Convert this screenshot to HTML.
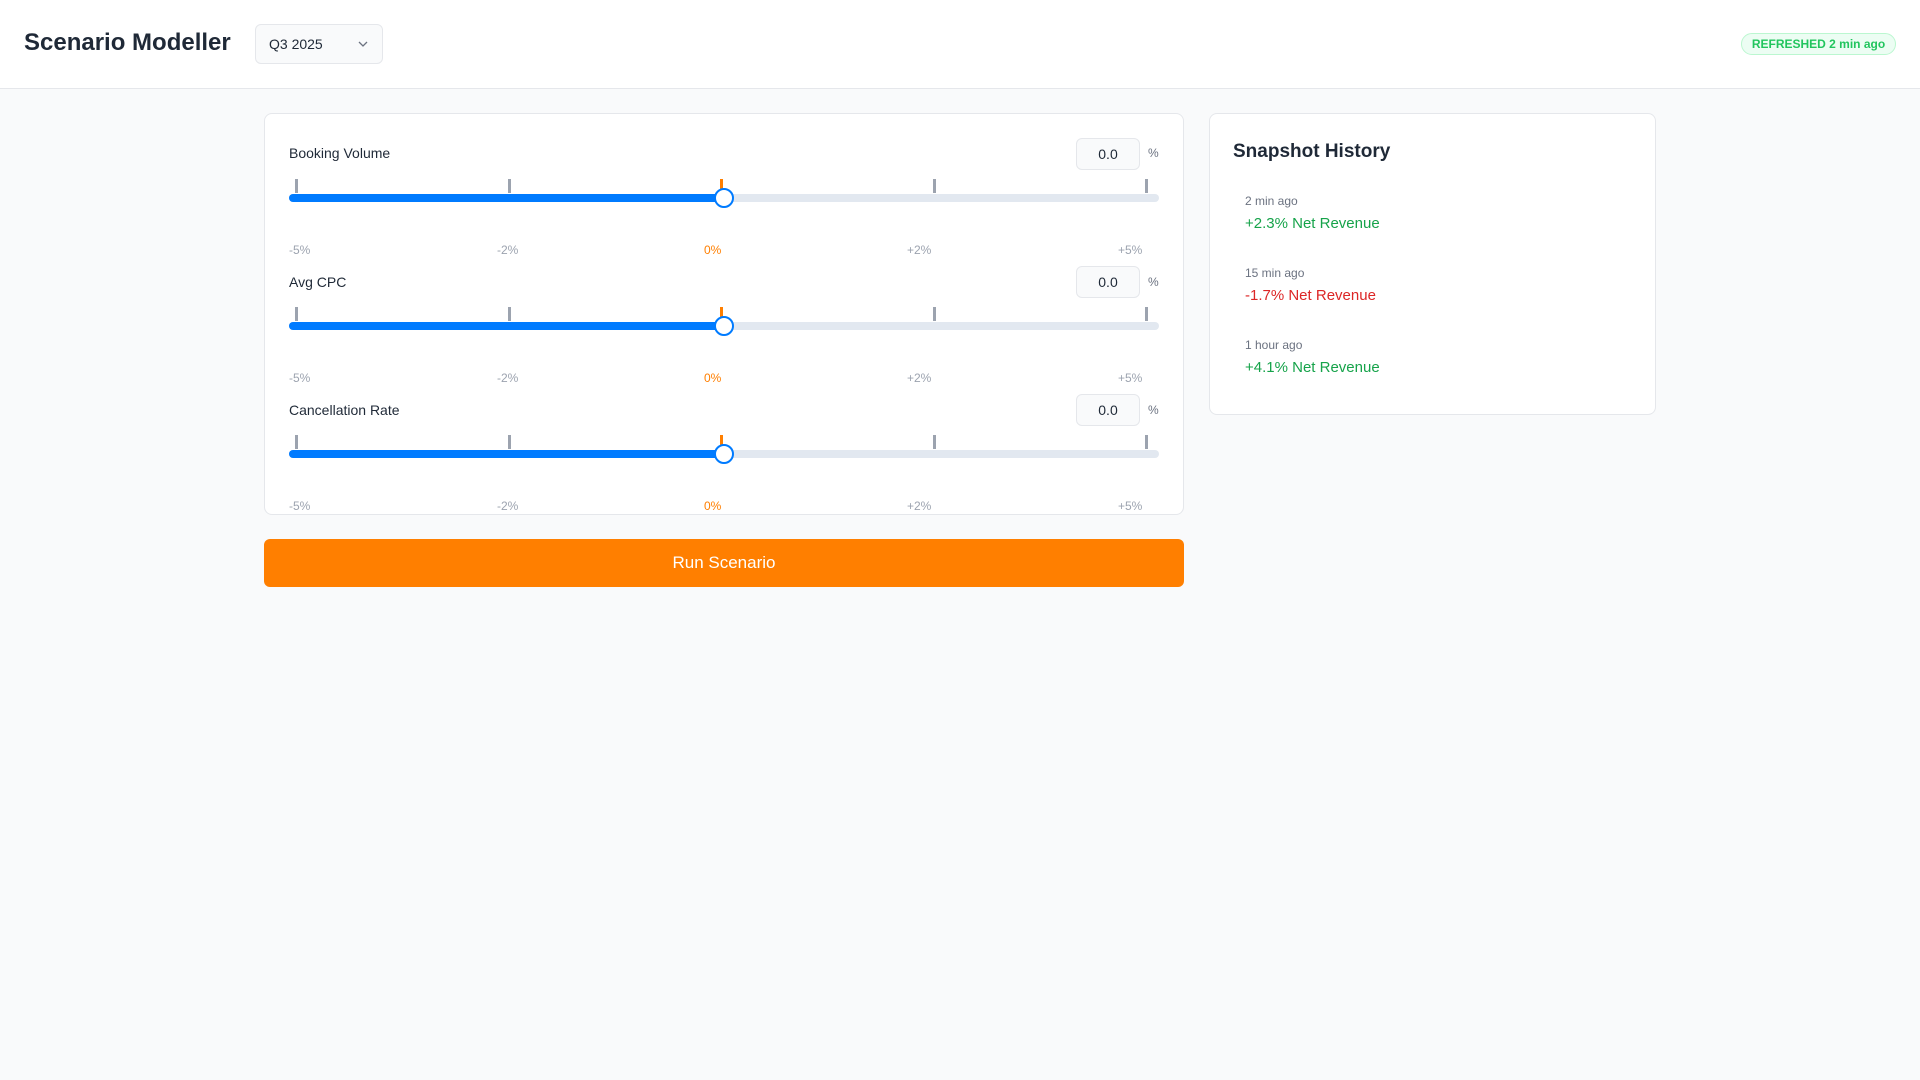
<!DOCTYPE html>
<html><head><meta charset="utf-8"><style>
*{box-sizing:border-box;margin:0;padding:0}
body{width:1920px;height:1080px;background:#f9fafb;font-family:"Liberation Sans",sans-serif;color:#1f2937;position:relative;overflow:hidden}
.hdr{position:absolute;left:0;top:0;width:1920px;height:89px;background:#fff;border-bottom:1px solid #e5e7eb}
.title{position:absolute;left:24px;top:29px;font-size:24px;font-weight:bold;color:#1f2937}
.sel{position:absolute;left:255px;top:24px;width:128px;height:40px;border:1px solid #e5e7eb;border-radius:6px;background:#f9fafb;font-size:14px;padding:11px 13px}
.sel svg{position:absolute;right:13px;top:15px}
.badge{position:absolute;left:1741px;top:33px;width:155px;height:22px;border:1px solid #bbf7d0;background:#ecfdf3;border-radius:11px;color:#22c55e;font-size:12px;font-weight:bold;text-align:center;line-height:20px}
.card{position:absolute;background:#fff;border:1px solid #e5e7eb;border-radius:8px}
.lbl{position:absolute;left:289px;font-size:14px;color:#1f2937}
.inp{position:absolute;left:1076px;width:64px;height:32px;border:1px solid #e5e7eb;border-radius:6px;background:#f9fafb;font-size:14px;text-align:center;line-height:30px}
.pct{position:absolute;left:1148px;font-size:12px;color:#6b7280}
.tick{position:absolute;width:3px;height:14px;background:#9ca3af}
.tick.o{background:#ff7f00}
.track{position:absolute;left:289px;width:870px;height:8px;border-radius:4px;background:#e2e8f0}
.fill{position:absolute;left:289px;width:435px;height:8px;border-radius:4px;background:#007bff}
.thumb{position:absolute;left:714px;width:20px;height:20px;border-radius:50%;background:#fff;border:2px solid #007bff}
.ax{position:absolute;font-size:12px;color:#9ca3af}
.ax.o{color:#ff7f00}
.btn{position:absolute;left:264px;top:539px;width:920px;height:48px;background:#ff7f00;border-radius:6px;color:#fff;font-size:17px;text-align:center;line-height:48px}
.h2{position:absolute;left:1233px;top:141px;font-size:19px;font-weight:bold}
.t{position:absolute;left:1245px;font-size:12px;color:#6b7280}
.v{position:absolute;left:1245px;font-size:15px}
</style></head><body>
<div class="hdr">
<div class="title">Scenario Modeller</div>
<div class="sel">Q3 2025<svg width="12" height="8" viewBox="0 0 12 8"><path d="M2 2l4 4 4-4" fill="none" stroke="#6b7280" stroke-width="1.3"/></svg></div>
<div class="badge">REFRESHED 2 min ago</div>
</div>
<div class="card" style="left:264px;top:113px;width:920px;height:402px"></div>
<div class="card" style="left:1209px;top:113px;width:447px;height:302px"></div>

<!-- slider 1 -->
<div class="lbl" style="top:145px">Booking Volume</div>
<div class="inp" style="top:138px">0.0</div><div class="pct" style="top:146px">%</div>
<div class="tick" style="left:295px;top:179px"></div><div class="tick" style="left:508px;top:179px"></div><div class="tick o" style="left:720px;top:179px"></div><div class="tick" style="left:933px;top:179px"></div><div class="tick" style="left:1145px;top:179px"></div>
<div class="track" style="top:194px"></div><div class="fill" style="top:194px"></div><div class="thumb" style="top:188px"></div>
<div class="ax" style="left:289px;top:243px">-5%</div><div class="ax" style="left:497px;top:243px">-2%</div><div class="ax o" style="left:704px;top:243px">0%</div><div class="ax" style="left:907px;top:243px">+2%</div><div class="ax" style="left:1118px;top:243px">+5%</div>

<!-- slider 2 -->
<div class="lbl" style="top:274px">Avg CPC</div>
<div class="inp" style="top:266px">0.0</div><div class="pct" style="top:275px">%</div>
<div class="tick" style="left:295px;top:307px"></div><div class="tick" style="left:508px;top:307px"></div><div class="tick o" style="left:720px;top:307px"></div><div class="tick" style="left:933px;top:307px"></div><div class="tick" style="left:1145px;top:307px"></div>
<div class="track" style="top:322px"></div><div class="fill" style="top:322px"></div><div class="thumb" style="top:316px"></div>
<div class="ax" style="left:289px;top:371px">-5%</div><div class="ax" style="left:497px;top:371px">-2%</div><div class="ax o" style="left:704px;top:371px">0%</div><div class="ax" style="left:907px;top:371px">+2%</div><div class="ax" style="left:1118px;top:371px">+5%</div>

<!-- slider 3 -->
<div class="lbl" style="top:402px">Cancellation Rate</div>
<div class="inp" style="top:394px">0.0</div><div class="pct" style="top:403px">%</div>
<div class="tick" style="left:295px;top:435px"></div><div class="tick" style="left:508px;top:435px"></div><div class="tick o" style="left:720px;top:435px"></div><div class="tick" style="left:933px;top:435px"></div><div class="tick" style="left:1145px;top:435px"></div>
<div class="track" style="top:450px"></div><div class="fill" style="top:450px"></div><div class="thumb" style="top:444px"></div>
<div class="ax" style="left:289px;top:499px">-5%</div><div class="ax" style="left:497px;top:499px">-2%</div><div class="ax o" style="left:704px;top:499px">0%</div><div class="ax" style="left:907px;top:499px">+2%</div><div class="ax" style="left:1118px;top:499px">+5%</div>

<div class="btn">Run Scenario</div>

<div class="h2">Snapshot History</div>
<div class="t" style="top:194px">2 min ago</div>
<div class="v" style="top:215px;color:#16a34a">+2.3% Net Revenue</div>
<div class="t" style="top:266px">15 min ago</div>
<div class="v" style="top:287px;color:#dc2626">-1.7% Net Revenue</div>
<div class="t" style="top:338px">1 hour ago</div>
<div class="v" style="top:359px;color:#16a34a">+4.1% Net Revenue</div>
</body></html>
